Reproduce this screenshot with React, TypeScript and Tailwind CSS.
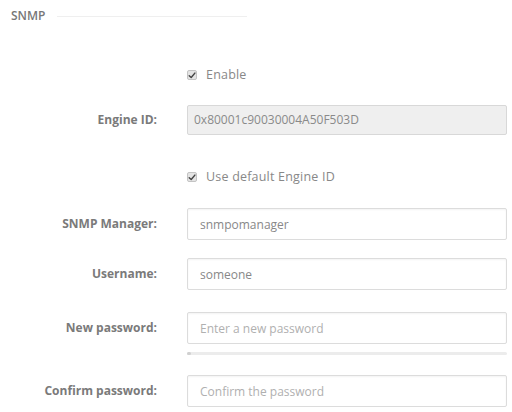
import React from "react";

const Check: React.FC<{ label: string }> = ({ label }) => (
  <label className="flex items-center gap-[9px] h-[16px]">
    <span className="flex items-center justify-center w-[10px] h-[10px] rounded-[2px] border border-[#c4c4c4] bg-[#e4e4e4]">
      <svg viewBox="0 0 10 10" className="w-[9px] h-[9px]">
        <path d="M1.5 5.2 L4 7.6 L8.6 2" fill="none" stroke="#444" strokeWidth="1.8" strokeLinecap="round" strokeLinejoin="round" />
      </svg>
    </span>
    <span className="text-[12.5px] text-[#888] tracking-[0.2px]">{label}</span>
  </label>
);

const Row: React.FC<{ label?: string; className?: string; children: React.ReactNode }> = ({ label, className = "", children }) => (
  <div className={`grid grid-cols-[157px_320px] gap-x-[30px] items-center ${className}`}>
    <span className="text-right text-[12px] font-bold text-[#7a7a7a]">{label}</span>
    <div>{children}</div>
  </div>
);

const Field: React.FC<{ value?: string; placeholder?: string; type?: string }> = ({ value, placeholder, type = "text" }) => (
  <input
    type={type}
    defaultValue={value}
    placeholder={placeholder}
    className="w-full h-[32px] px-[12px] rounded-[2px] border border-[#dcdcdc] bg-white text-[12px] text-[#888] placeholder:text-[#b0b0b0] shadow-[inset_0_1px_2px_rgba(0,0,0,0.05)] outline-none"
  />
);

export default function App() {
  return (
    <div className="w-[512px] h-[412px] bg-white overflow-hidden" style={{ fontFamily: '"Open Sans", sans-serif' }}>
      <div className="flex items-center h-[32px] pl-[11px]">
        <span className="text-[12px] font-semibold text-[#777]">SNMP</span>
        <span className="ml-[12px] w-[190px] h-px bg-[#efefef]" />
      </div>

      <Row className="mt-[35px]">
        <Check label="Enable" />
      </Row>

      <Row label="Engine ID:" className="mt-[22px]">
        <div className="h-[30px] px-[6px] flex items-center rounded-[2px] border border-[#d8d8d8] bg-[#efefef] text-[12px] text-[#8a8a8a]">
          0x80001c90030004A50F503D
        </div>
      </Row>

      <Row className="mt-[34px]">
        <Check label="Use default Engine ID" />
      </Row>

      <Row label="SNMP Manager:" className="mt-[23px]">
        <Field value="snmpomanager" />
      </Row>

      <Row label="Username:" className="mt-[18px]">
        <Field value="someone" />
      </Row>

      <Row label="New password:" className="mt-[22px]">
        <Field type="password" placeholder="Enter a new password" />
      </Row>

      <Row className="mt-[8px]">
        <div className="relative h-[3px] rounded-full bg-[#ececec]">
          <span className="absolute left-0 top-0 h-[3px] w-[4px] rounded-full bg-[#d0d0d0]" />
        </div>
      </Row>

      <Row label="Confirm password:" className="mt-[20px]">
        <Field type="password" placeholder="Confirm the password" />
      </Row>
    </div>
  );
}
